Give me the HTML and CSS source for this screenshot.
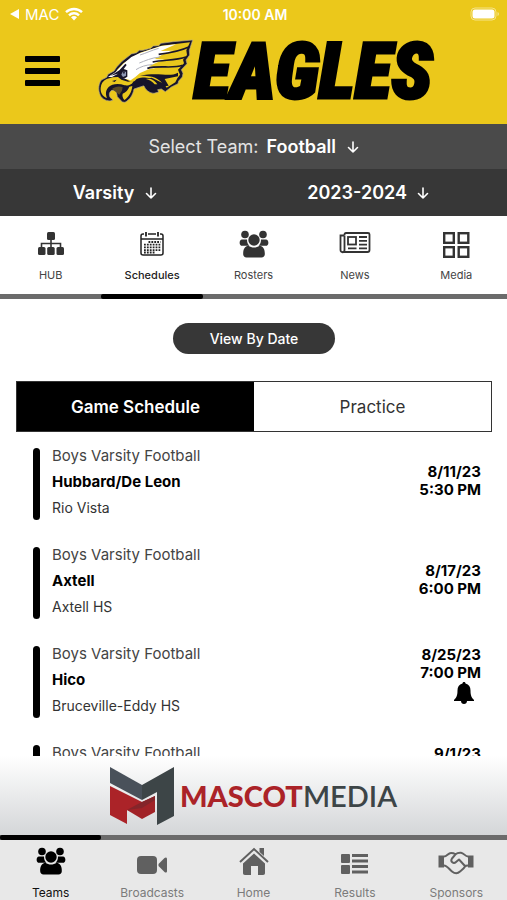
FILE: index.html
```html
<!DOCTYPE html>
<html lang="en">
<head>
    <meta charset="UTF-8">
    <meta name="viewport" content="width=device-width, initial-scale=1.0">
    <title>Eagles - Schedules</title>
    <link rel="stylesheet" href="styles.css">
</head>
<body>

<!-- shared icons -->
<svg class="sprite" aria-hidden="true">
    <symbol id="arrow-down" viewBox="0 0 12 14">
        <path d="M6 2v10M1.500 7.500L6 12l4.500-4.500" fill="none" stroke="currentColor" stroke-width="1.600" stroke-linecap="round" stroke-linejoin="round"/>
    </symbol>
    <symbol id="people" viewBox="0 0 30 28">
        <circle cx="6" cy="4.500" r="3.800"/>
        <circle cx="24" cy="4.500" r="3.800"/>
        <path d="M3 9.500h5c0 3 .8 4.700 2.400 6.300H3.500C-.5 15.800 0 9.500 3 9.500zM27 9.500h-5c0 3-.8 4.700-2.400 6.300h6.900c4 0 3.500-6.300.500-6.300z"/>
        <circle cx="15" cy="10" r="5.700"/>
        <path d="M9.500 15.800c3 2.400 8 2.400 11 0 4 .5 5.500 4 5.300 8.500 0 2-1.300 3.200-3.300 3.200h-15c-2 0-3.300-1.200-3.300-3.200-.2-4.500 1.300-8 5.300-8.500z"/>
    </symbol>
    <symbol id="bell" viewBox="0 0 20 22">
        <path d="M10 0c1 0 1.500.6 1.500 1.600C15 2.500 16.500 5 16.500 8.500c0 5 1 7 3.500 9.500v1H0v-1c2.500-2.500 3.500-4.500 3.500-9.500C3.500 5 5 2.500 8.500 1.600 8.500.6 9 0 10 0zM7 19h6c0 1.800-1.300 3-3 3s-3-1.200-3-3z"/>
    </symbol>
</svg>

<header class="header">
    <div class="status">
        <div class="status-left">
            <svg width="9" height="10" viewBox="0 0 9 10"><path d="M9 0v10L0 5z" fill="#fff"/></svg>
            <span>MAC</span>
            <svg width="18" height="14" viewBox="0 0 18 14">
                <path d="M1 5.200a11.500 11.500 0 0 1 16 0M4 8.300a7.200 7.200 0 0 1 10 0" fill="none" stroke="#fff" stroke-width="2.400"/>
                <path d="M9 13.500l-3-3.200a4.400 4.400 0 0 1 6 0z" fill="#fff"/>
            </svg>
        </div>
        <div class="status-time">10:00 AM</div>
        <div class="status-right">
            <svg width="30" height="14" viewBox="0 0 30 14">
                <rect x="1" y="1" width="25" height="12" rx="4" fill="none" stroke="#f5e389" stroke-width="1"/>
                <rect x="2.500" y="2.500" width="22" height="9" rx="2.500" fill="#fff"/>
                <path d="M27.500 5v4c2-.8 2-3.200 0-4z" fill="#f5e389"/>
            </svg>
        </div>
    </div>
    <div class="brand">
        <button class="menu-button" aria-label="Menu">
            <span></span>
            <span></span>
            <span></span>
        </button>
        <div class="logo">
            <svg class="eagle" viewBox="24 34 288 192">
                <!-- outline -->
                <path d="M308 37L250 42 213 47 206 54 190 55 182 62 158 68 148 68 140 75 124 79 96 101 80 118 72 130 54 140 50 149 34 157C26 168 24 184 29 198C33 212 45 219 60 220L69 217 60 209C56 200 58 193 65 188L78 188 82 207 97 223 105 224C119 216 128 204 132 184L150 178 162 174C166 187 178 196 192 197L206 193 203 186 214 184 226 192 244 178 264 168 266 160 277 148 279 137 274 126 291 108 288 97 299 82 298 68z" fill="#17142a" stroke="#b3a98c" stroke-width="2" stroke-linejoin="round"/>
                <!-- feathers -->
                <path d="M300 44L214 54 150 75 100 107 80 128 100 150 122 162 150 160 185 150 222 168 230 180 256 164 262 152 270 141 264 126 282 107 279 96 291 82 289 68z" fill="#e9c71c"/>
                <path d="M258 50L214 55 186 64 150 76 124 88 100 108 76 134 54 148 66 148 84 138 96 144 100 152 122 158 136 148 150 136 178 124 202 120 176 116 206 102 224 96 194 94 226 76 250 69 212 70z" fill="#fff"/>
                <path d="M298 57C266 72 238 76 206 80M288 88C256 99 222 96 188 103M278 113C248 124 208 112 172 122" fill="none" stroke="#17142a" stroke-width="5"/>
                <path d="M264 135C238 150 210 133 150 144C190 144 206 150 224 176L236 174 224 154 264 146z" fill="#17142a"/>
                <path d="M140 154C168 145 190 150 210 176L201 184C190 168 180 162 166 162C168 170 174 178 184 184C170 182 160 174 154 165C142 162 132 168 122 172z" fill="#17142a"/>
                <path d="M168 154C184 152 194 158 202 170L194 170C186 160 178 156 168 154zM234 156L252 151 254 157 242 166z" fill="#e9c71c"/>
                <path d="M206 62C184 68 170 76 150 82M210 88C184 90 164 100 148 106M188 111C168 111 150 118 138 126" fill="none" stroke="#aeb0bc" stroke-width="3"/>
                <!-- brow and eye -->
                <path d="M62 144L88 128 106 108 110 112 101 124 112 128 112 147 102 153 90 148 84 138z" fill="#17142a"/>
                <path d="M98 132L108 132 108 144 99 148 94 141z" fill="#8f98b5"/>
                <path d="M98 134L105 133 102 140z" fill="#17142a"/>
                <!-- beak -->
                <path d="M50 154L68 149 84 148 94 156 114 162 130 160C128 170 116 175 104 173C86 166 66 168 56 178C47 188 46 198 51 211C38 207 31 196 32 181C33 168 39 159 50 154z" fill="#e9c71c"/>
                <path d="M118 177L127 175C125 194 116 209 103 217C98 211 96 203 98 198C108 194 114 187 118 177z" fill="#e9c71c"/>
                <path d="M66 184C74 176 90 174 98 179L96 189 88 201z" fill="#5b4b24"/>
                <path d="M66 160L80 156 74 163z" fill="#17142a"/>
            </svg>
            <h1 class="logo-text">EAGLES</h1>
        </div>
    </div>
</header>

<div class="team-bar">
    <label for="team">Select Team:</label>
    <select id="team">
        <option>Football</option>
    </select>
    <svg class="arrow"><use href="#arrow-down"/></svg>
</div>
<div class="season-bar">
    <div class="season-cell">
        <select aria-label="Level">
            <option>Varsity</option>
        </select>
        <svg class="arrow"><use href="#arrow-down"/></svg>
    </div>
    <div class="season-cell">
        <select aria-label="Season">
            <option>2023-2024</option>
        </select>
        <svg class="arrow"><use href="#arrow-down"/></svg>
    </div>
</div>

<nav class="tabs">
    <a href="#hub">
        <svg width="28" height="28" viewBox="0 0 28 28" fill="#333">
            <rect x="10" y="2" width="8" height="8" rx="1.500"/>
            <path d="M14 9v9M4.500 18v-4.500h19V18" fill="none" stroke="#333" stroke-width="1.600"/>
            <rect x="1" y="17" width="7.500" height="8" rx="1.500"/>
            <rect x="10.200" y="17" width="7.500" height="8" rx="1.500"/>
            <rect x="19.500" y="17" width="7.500" height="8" rx="1.500"/>
        </svg>
        <span>HUB</span>
    </a>
    <a href="#schedules" class="active">
        <svg width="28" height="28" viewBox="0 0 28 28" fill="none" stroke="#222">
            <rect x="3" y="4" width="22" height="21" rx="2" stroke-width="1.500"/>
            <path d="M3 9h22" stroke-width="1.500"/>
            <path d="M8 2v5M20 2v5" stroke="#fff" stroke-width="4"/>
            <path d="M8 2v4.500M20 2v4.500" stroke-width="1.800"/>
            <path d="M10.500 12h12M6 14.700h16.500M6 17.400h16.500M6 20.100h16.500M6 22.500h11" stroke-width="1.800" stroke-dasharray="1.800 1.100"/>
        </svg>
        <span>Schedules</span>
    </a>
    <a href="#rosters">
        <svg width="30" height="28" fill="#333"><use href="#people"/></svg>
        <span>Rosters</span>
    </a>
    <a href="#news">
        <svg width="32" height="28" viewBox="0 0 32 28" fill="none" stroke="#333" stroke-width="1.800">
            <path d="M5.500 5.500V20c0 3-4 3-4 0V5.500h4M5.500 5V4.500c0-1 .5-1.500 1.500-1.500h22c1 0 1.500.5 1.500 1.500V20c0 1.300-.7 2-2 2h-25"/>
            <rect x="9" y="7" width="8" height="7.500"/>
            <path d="M20 7h8M20 10.800h8M20 14.600h8M9 18.400h8.500M20 18.400h8"/>
        </svg>
        <span>News</span>
    </a>
    <a href="#media">
        <svg width="28" height="28" viewBox="0 0 28 28" fill="none" stroke="#333" stroke-width="2.400">
            <rect x="2.200" y="3.200" width="9.600" height="9.600"/>
            <rect x="16.700" y="3.200" width="9.600" height="9.600"/>
            <rect x="2.200" y="17.200" width="9.600" height="9.600"/>
            <rect x="16.700" y="17.200" width="9.600" height="9.600"/>
        </svg>
        <span>Media</span>
    </a>
</nav>

<main class="content">
    <button class="view-button">View By Date</button>
    <div class="switch">
        <button class="selected">Game Schedule</button>
        <button>Practice</button>
    </div>
    <ul class="games">
        <li class="game">
            <div class="info">
                <p class="team">Boys Varsity Football</p>
                <p class="opponent">Hubbard/De Leon</p>
                <p class="place">Rio Vista</p>
            </div>
            <div class="when">8/11/23<br>5:30 PM</div>
        </li>
        <li class="game">
            <div class="info">
                <p class="team">Boys Varsity Football</p>
                <p class="opponent">Axtell</p>
                <p class="place">Axtell HS</p>
            </div>
            <div class="when">8/17/23<br>6:00 PM</div>
        </li>
        <li class="game">
            <div class="info">
                <p class="team">Boys Varsity Football</p>
                <p class="opponent">Hico</p>
                <p class="place">Bruceville-Eddy HS</p>
            </div>
            <div class="when">8/25/23<br>7:00 PM
                <button class="bell" aria-label="Notify me"><svg width="20" height="22"><use href="#bell"/></svg></button>
            </div>
        </li>
        <li class="game">
            <div class="info">
                <p class="team">Boys Varsity Football</p>
            </div>
            <div class="when top">9/1/23</div>
        </li>
    </ul>
</main>

<a class="sponsor" href="#mascot-media">
    <svg width="64" height="58" viewBox="0 0 64 58">
        <path d="M0 0l32 18v15L0 16z" fill="#49515a"/>
        <path d="M64 0L32 18v15l15-8v33l17-9z" fill="#3d4547"/>
        <path d="M0 19l32 16v12l-15-4v14L0 48z" fill="#ab2328"/>
        <path d="M45 29L32 35l-15 8 15 9 13-7z" fill="#a12227"/>
        <path d="M17 43l15-8 13-6v4L32 41z" fill="#84252a"/>
    </svg>
    <span class="sponsor-name"><b>MASCOT</b>MEDIA</span>
</a>

<nav class="bottom-nav">
    <a href="#teams" class="active">
        <svg width="30" height="28"><use href="#people"/></svg>
        <span>Teams</span>
    </a>
    <a href="#broadcasts">
        <svg width="32" height="28" viewBox="0 0 32 28">
            <rect x="1" y="9" width="20" height="18" rx="4"/>
            <path d="M22.500 17l6-6c1.200-1 2.500-.6 2.500 1v12c0 1.600-1.300 2-2.500 1l-6-6z"/>
        </svg>
        <span>Broadcasts</span>
    </a>
    <a href="#home">
        <svg width="30" height="28" viewBox="0 0 30 28">
            <path d="M1 15L15 2l14 13" fill="none" stroke="#606060" stroke-width="2"/>
            <path d="M20.500 1H25v8l-4.500-4zM15 6.500l11 10V26c0 1-.6 2-2 2h-5v-9h-7v9H6c-1.400 0-2-1-2-2v-9.500z"/>
        </svg>
        <span>Home</span>
    </a>
    <a href="#results">
        <svg width="28" height="28" viewBox="0 0 28 28">
            <rect x="0" y="7" width="9" height="9" rx="1"/>
            <rect x="0" y="18" width="9" height="9" rx="1"/>
            <path d="M11 7h16v3H11zM11 12.500h16v3H11zM11 18h16v3H11zM11 23.500h16v3H11z"/>
        </svg>
        <span>Results</span>
    </a>
    <a href="#sponsors">
        <svg width="36" height="28" viewBox="0 0 36 28">
            <path d="M.5 8.500h5.500v12H.5zM30 8.500h5.500v12H30z"/>
            <path d="M6 9.500c3 0 4-3.500 7-3.500 2 0 3 .3 4.500 1.300C19 6 21 5.500 23 5.700c3 .3 4 3.800 7 3.800M6 18.500c3 0 5 3.500 8 6 2.500 2 5.500 2.500 8 0 2.500-2 4-3 5-5 .6-1 1.500-1 3-1M17.500 7.300L14 11.500c-2 3 1.500 6 4 3.500l3-2.500 6 6.500" fill="none" stroke="#606060" stroke-width="2" stroke-linejoin="round"/>
        </svg>
        <span>Sponsors</span>
    </a>
</nav>

</body>
</html>
```

FILE: styles.css
```css
* {
    box-sizing: border-box;
}
body {
    margin: 0;
    height: 100vh;
    display: flex;
    flex-direction: column;
    overflow: hidden;
    background: #fff;
    color: #333;
    font-family: Inter, "Liberation Sans", sans-serif;
}
button,
select {
    margin: 0;
    padding: 0;
    border: none;
    background: none;
    color: inherit;
    font-family: inherit;
    cursor: pointer;
}
a {
    color: inherit;
    text-decoration: none;
}
.sprite {
    display: none;
}

/* header */
.header {
    flex: none;
    height: 124px;
    background: #ebc81b;
}
.status {
    display: grid;
    grid-template-columns: 1fr auto 1fr;
    align-items: center;
    height: 28px;
    padding: 0 7px 0 10px;
    color: #fff;
    font-size: 15px;
}
.status-left {
    display: flex;
    align-items: center;
    gap: 6px;
}
.status-time {
    font-size: 14px;
    font-weight: 600;
}
.status-right {
    display: flex;
    justify-content: flex-end;
}
.brand {
    display: flex;
    align-items: center;
    height: 86px;
    padding-left: 25px;
    gap: 38px;
}
.menu-button {
    display: flex;
    flex-direction: column;
    gap: 6px;
    width: 35px;
}
.menu-button span {
    height: 6px;
    border-radius: 1px;
    background: #000;
}
.logo {
    display: flex;
    align-items: center;
}
.eagle {
    width: 96px;
    height: 64px;
}
.logo-text {
    margin: 0;
    padding-top: 2px;
    color: #000;
    font-family: "Roboto Condensed", "Liberation Sans Narrow", "Liberation Sans", sans-serif;
    font-size: 77px;
    font-weight: 900;
    font-style: italic;
    line-height: 64px;
    -webkit-text-stroke: 3px #000;
}

/* team and season pickers */
.team-bar,
.season-bar {
    flex: none;
    display: flex;
    justify-content: center;
    align-items: center;
    color: #fff;
    font-size: 18px;
}
.team-bar {
    height: 45px;
    background: #4a4a4a;
}
.team-bar label {
    margin-right: 8px;
    color: #e4e4e4;
}
.season-bar {
    height: 47px;
    background: #373737;
}
.season-cell {
    flex: 1;
    display: flex;
    justify-content: center;
    align-items: center;
    padding-right: 24px;
}
.team-bar select,
.season-bar select {
    appearance: none;
    font-size: 18px;
    font-weight: 600;
}
.arrow {
    width: 12px;
    height: 14px;
    margin-left: 10px;
}

/* section tabs */
.tabs {
    flex: none;
    display: flex;
    height: 83px;
    border-bottom: 5px solid #6b6b6b;
    color: #444;
    font-size: 11px;
}
.tabs a,
.bottom-nav a {
    position: relative;
    flex: 1;
    display: flex;
    flex-direction: column;
    align-items: center;
}
.tabs a {
    padding-top: 14px;
    gap: 10px;
}
.tabs span,
.bottom-nav span {
    line-height: 14px;
}
.tabs a.active {
    color: #222;
    font-weight: 500;
}
.tabs a.active::after,
.bottom-nav a.active::after {
    content: "";
    position: absolute;
    left: 0;
    right: 0;
    height: 5px;
    border-radius: 2px;
    background: #000;
}
.tabs a.active::after {
    bottom: -5px;
}
.bottom-nav a.active::after {
    top: -5px;
}

/* schedule */
.content {
    flex: 1;
    min-height: 0;
    overflow: hidden;
    padding: 24px 15px 0 16px;
}
.view-button {
    display: block;
    width: 162px;
    height: 31px;
    margin: 0 auto 27px;
    border-radius: 16px;
    background: #373737;
    color: #fff;
    font-size: 14px;
    font-weight: 500;
}
.switch {
    display: flex;
    height: 51px;
    border: 1px solid #333;
}
.switch button {
    flex: 1;
    color: #333;
    font-size: 17px;
}
.switch button.selected {
    background: #000;
    color: #fff;
    font-weight: 600;
}
.games {
    margin: 0;
    padding: 16px 11px 0 17px;
    list-style: none;
}
.game {
    display: flex;
    justify-content: space-between;
    align-items: center;
    height: 72px;
    margin-bottom: 27px;
}
.info {
    align-self: stretch;
    position: relative;
    padding-left: 19px;
}
.info::before {
    content: "";
    position: absolute;
    left: 0;
    top: 0;
    bottom: 0;
    width: 7px;
    border-radius: 4px;
    background: #000;
}
.info p {
    margin: 0;
}
.info .team {
    color: #444;
    font-size: 15px;
    line-height: 16px;
}
.info .opponent {
    margin: 9px 0 8px;
    color: #000;
    font-size: 15px;
    font-weight: 700;
    line-height: 18px;
}
.info .place {
    font-size: 14px;
    line-height: 18px;
}
.when {
    padding-bottom: 6px;
    color: #000;
    font-size: 15px;
    font-weight: 700;
    line-height: 18px;
    text-align: right;
}
.when.top {
    align-self: flex-start;
}
.bell {
    display: block;
    height: 22px;
    margin: 0 7px 8px auto;
}
.bell svg {
    display: block;
}

/* sponsor banner */
.sponsor {
    flex: none;
    display: flex;
    justify-content: center;
    align-items: center;
    gap: 6px;
    height: 79px;
    background: linear-gradient(#fff, #d4d6d8);
    color: #3d4547;
}
.sponsor-name {
    font-family: Lato, sans-serif;
    font-size: 29px;
    font-weight: 600;
}
.sponsor-name b {
    color: #ab2328;
    font-weight: 900;
}

/* bottom navigation */
.bottom-nav {
    flex: none;
    display: flex;
    height: 65px;
    border-top: 5px solid #6b6b6b;
    background: #e8e8e8;
    color: #7b7b7b;
    font-size: 12px;
}
.bottom-nav a {
    padding-top: 7px;
    gap: 11px;
    fill: #606060;
}
.bottom-nav a.active {
    color: #111;
    fill: #000;
}
```
